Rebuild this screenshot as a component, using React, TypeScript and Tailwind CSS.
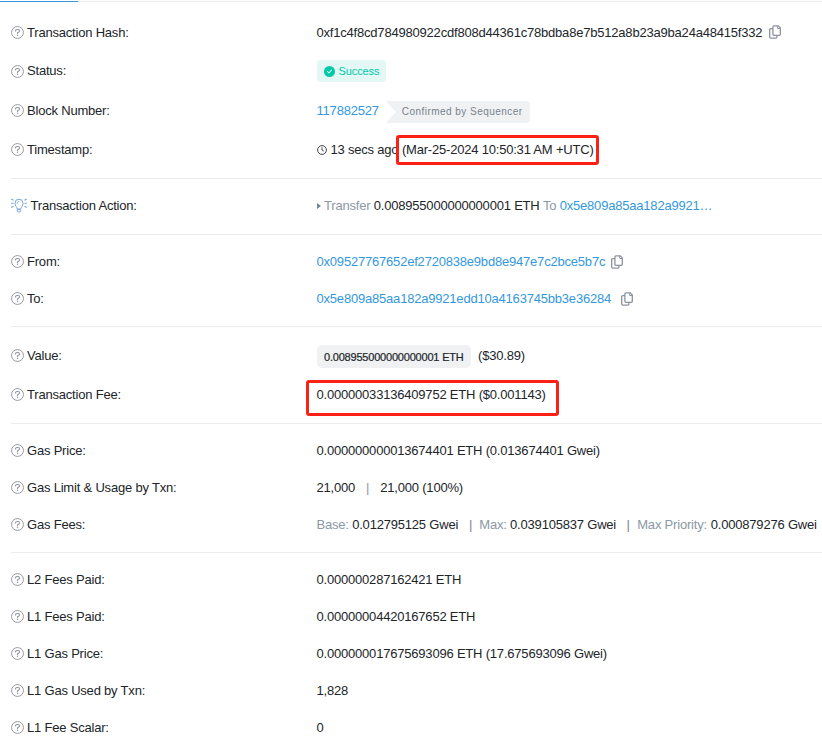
import React from "react";
import { FaCircleCheck } from "react-icons/fa6";

function Help() {
  return (
    <svg className="mr-[3px] h-[13px] w-[13px] shrink-0" viewBox="0 0 13 13" fill="none" stroke="#93969f">
      <circle cx="6.5" cy="6.5" r="5.95" strokeWidth="0.95" />
      <path d="M4.6 5V4.8a1.3 1.3 0 0 1 1.3-1.3h1.2a1.4 1.4 0 0 1 .7 2.6l-1.3.8v.6" strokeWidth="1.1" strokeLinecap="round" />
      <circle cx="6.5" cy="9.3" r="0.75" fill="#93969f" stroke="none" />
    </svg>
  );
}

function Bulb() {
  return (
    <svg className="mr-[3.5px] h-[15px] w-4 shrink-0" viewBox="0 0 16 15" fill="none" stroke="#77a5de" strokeLinecap="round">
      <path d="M6.2 10.6C6 9 4 8 4 5.2a4 4 0 0 1 8 0c0 2.8-2 3.8-2.2 5.4zM6.3 12.1v.6c0 .8.6 1.3 1.3 1.3h.8c.7 0 1.3-.5 1.3-1.3v-.6z" strokeWidth="1" />
      <path d="M6 5.3a2 2 0 0 1 2-2" strokeWidth="0.8" />
      <path d="M.6 1.3l1.500.8M.5 5.2h1.600M.6 9.2l1.500-.8M15.4 1.3l-1.500.8M15.5 5.2h-1.600M15.4 9.2l-1.500-.8" strokeWidth="1.1" />
    </svg>
  );
}

function Copy({ className = "" }: { className?: string }) {
  return (
    <svg className={`h-[14px] w-3 shrink-0 ${className}`} viewBox="0 0 12 14" fill="none" stroke="#8b929e" strokeWidth="1.3" strokeLinejoin="round">
      <path d="M4.900 .9h4.400l2 2v6.400a1 1 0 0 1-1 1H4.900a1 1 0 0 1-1-1V1.900a1 1 0 0 1 1-1z" />
      <path d="M8.700 .9v2.600h2.600" strokeWidth="1" />
      <path d="M3.900 3.600H1.700a1 1 0 0 0-1 1v7.500a1 1 0 0 0 1 1h5.200a1 1 0 0 0 1-1v-1.800" />
    </svg>
  );
}

function Clock() {
  return (
    <svg className="mr-1 h-[10px] w-[10px] shrink-0" viewBox="0 0 10 10" fill="none" stroke="#3f444b">
      <circle cx="5" cy="5" r="4.4" />
      <path d="M5 2.3V5l1.8 1.2" />
    </svg>
  );
}

type RowProps = { label: string; height?: string; icon?: React.ReactNode; children: React.ReactNode };

function Row({ label, height = "h-[37px]", icon = <Help />, children }: RowProps) {
  return (
    <div className={`flex items-center ${height}`}>
      <div className="flex w-[305.5px] shrink-0 items-center">
        {icon}
        <span>{label}</span>
      </div>
      <div className="flex items-center">{children}</div>
    </div>
  );
}

function Section({ className = "pt-2 pb-[9px]", children }: { className?: string; children: React.ReactNode }) {
  return <section className={`ml-[11px] border-b border-[#e9ecef] ${className}`}>{children}</section>;
}

const Link = ({ children }: { children: React.ReactNode }) => <a className="text-[#3498db]">{children}</a>;
const Muted = ({ children }: { children: React.ReactNode }) => <span className="text-[#8c98a4]">{children}</span>;

export default function App() {
  return (
    <main className="h-[741px] w-[822px] overflow-hidden bg-white font-['Liberation_Sans',Arial,sans-serif] text-[13px] leading-[18px] tracking-[-0.2px] whitespace-pre text-[#212529]">
      <div className="flex h-[2px] items-end">
        <div className="h-px w-[78px] bg-[#3498db]" />
        <div className="h-px flex-1 bg-[#e9ecef]" />
      </div>
      <Section className="pt-3 pb-[9px]">
        <Row label="Transaction Hash:">
          <span>0xf1c4f8cd784980922cdf808d44361c78bdba8e7b512a8b23a9ba24a48415f332</span>
          <Copy className="mb-px ml-[6.5px]" />
        </Row>
        <Row label="Status:" height="h-[40px]">
          <span className="ml-[0.5px] flex h-[22px] w-[69px] items-center rounded bg-[#e3f8f4] pl-[7px] text-[11px] tracking-[-0.1px] text-[#00c9a7]">
            <FaCircleCheck className="mr-[3.5px] h-[11px] w-[11px]" />
            Success
          </span>
        </Row>
        <Row label="Block Number:" height="h-[39px]">
          <Link>117882527</Link>
          <span className="mt-[3px] ml-[7px] flex h-[22px] w-[144px] items-center rounded-r bg-[#f0f1f3] pl-4 text-[10px] tracking-[0.46px] text-[#77838f] [clip-path:polygon(0_0,100%_0,100%_100%,0_100%,10px_50%)]">
            Confirmed by Sequencer
          </span>
        </Row>
        <Row label="Timestamp:" height="h-[39px]">
          <Clock />
          <span>13 secs ago</span>
          <span className="relative ml-[3.5px]">
            (Mar-25-2024 10:50:31 AM +UTC)
            <span className="absolute -top-[6px] -left-[6px] h-[30px] w-[203px] rounded-[3px] border-3 border-[#fc2016]" />
          </span>
        </Row>
      </Section>
      <Section className="pt-2 pb-[10px]">
        <Row label="Transaction Action:" icon={<Bulb />}>
          <span className="mr-[3.5px] h-0 w-0 border-y-[3px] border-l-[4px] border-y-transparent border-l-[#77838f]" />
          <Muted>Transfer </Muted>
          <span>0.008955000000000001 ETH </span>
          <Muted>To </Muted>
          <Link>0x5e809a85aa182a9921…</Link>
        </Row>
      </Section>
      <Section>
        <Row label="From:">
          <Link>0x09527767652ef2720838e9bd8e947e7c2bce5b7c</Link>
          <Copy className="ml-[6px]" />
        </Row>
        <Row label="To:">
          <Link>0x5e809a85aa182a9921edd10a4163745bb3e36284</Link>
          <Copy className="ml-[10px]" />
        </Row>
      </Section>
      <Section className="pt-2 pb-[10px]">
        <Row label="Value:" height="h-[41px]">
          <span className="mt-[2px] mr-[7px] ml-[0.5px] flex h-[23px] w-[154px] items-center rounded-[5px] bg-[#f0f1f3] pl-[7px] text-[11px] [-webkit-text-stroke:0.2px_#212529]">
            0.008955000000000001 ETH
          </span>
          <span>($30.89)</span>
        </Row>
        <Row label="Transaction Fee:" height="h-[37px]">
          <span className="relative">
            0.00000033136409752 ETH ($0.001143)
            <span className="absolute top-[-5.5px] left-[-10.5px] h-[36px] w-[253px] rounded-[3px] border-3 border-[#fc2016]" />
          </span>
        </Row>
      </Section>
      <Section>
        <Row label="Gas Price:">
          <span>0.000000000013674401 ETH (0.013674401 Gwei)</span>
        </Row>
        <Row label="Gas Limit & Usage by Txn:">
          <span>21,000</span>
          <span className="mx-[11px] text-[#8c98a4]">|</span>
          <span>21,000 (100%)</span>
        </Row>
        <Row label="Gas Fees:">
          <Muted>Base: </Muted>
          <span>0.012795125 Gwei</span>
          <span className="mr-[7px] ml-[11px] text-[#77838f]">|</span>
          <Muted>Max: </Muted>
          <span>0.039105837 Gwei</span>
          <span className="mr-[7.5px] ml-[10.5px] text-[#77838f]">|</span>
          <Muted>Max Priority: </Muted>
          <span className="ml-[0.5px]">0.000879276 Gwei</span>
        </Row>
      </Section>
      <Section>
        <Row label="L2 Fees Paid:">0.000000287162421 ETH</Row>
        <Row label="L1 Fees Paid:">0.00000004420167652 ETH</Row>
        <Row label="L1 Gas Price:">0.000000017675693096 ETH (17.675693096 Gwei)</Row>
        <Row label="L1 Gas Used by Txn:">1,828</Row>
        <Row label="L1 Fee Scalar:">0</Row>
      </Section>
    </main>
  );
}
